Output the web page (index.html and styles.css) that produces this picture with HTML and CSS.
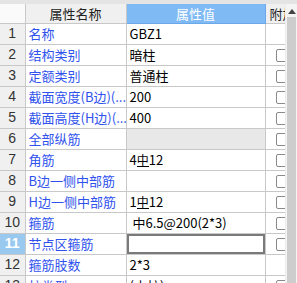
FILE: index.html
```html
<!DOCTYPE html>
<html lang="zh-CN">
<head>
    <meta charset="UTF-8">
    <title>属性编辑</title>
    <link rel="stylesheet" href="styles.css">
</head>
<body>
    <div class="panel">
        <div class="grid-wrap">
            <table class="prop-grid">
                <colgroup>
                    <col class="c-no"><col class="c-name"><col class="c-val"><col class="c-att">
                </colgroup>
                <thead>
                    <tr>
                        <th class="corner"></th>
                        <th>属性名称</th>
                        <th class="active">属性值</th>
                        <th class="att">附加</th>
                    </tr>
                </thead>
                <tbody>
                    <tr><td class="no">1</td><td class="name">名称</td><td class="val">GBZ1</td><td class="att"></td></tr>
                    <tr><td class="no">2</td><td class="name">结构类别</td><td class="val">暗柱</td><td class="att"><span class="chk"></span></td></tr>
                    <tr><td class="no">3</td><td class="name">定额类别</td><td class="val">普通柱</td><td class="att"><span class="chk"></span></td></tr>
                    <tr><td class="no">4</td><td class="name">截面宽度(B边)(...</td><td class="val">200</td><td class="att"><span class="chk"></span></td></tr>
                    <tr><td class="no">5</td><td class="name">截面高度(H边)(...</td><td class="val">400</td><td class="att"><span class="chk"></span></td></tr>
                    <tr><td class="no">6</td><td class="name">全部纵筋</td><td class="val grey"></td><td class="att"><span class="chk"></span></td></tr>
                    <tr><td class="no">7</td><td class="name">角筋</td><td class="val">4<span class="bar">中</span>12</td><td class="att"><span class="chk"></span></td></tr>
                    <tr><td class="no">8</td><td class="name">B边一侧中部筋</td><td class="val"></td><td class="att"><span class="chk"></span></td></tr>
                    <tr><td class="no">9</td><td class="name">H边一侧中部筋</td><td class="val">1<span class="bar">中</span>12</td><td class="att"><span class="chk"></span></td></tr>
                    <tr><td class="no">10</td><td class="name">箍筋</td><td class="val">&nbsp;中6.5@200(2*3)</td><td class="att"><span class="chk"></span></td></tr>
                    <tr class="current"><td class="no">11</td><td class="name">节点区箍筋</td><td class="val"><div class="editor"></div></td><td class="att"><span class="chk"></span></td></tr>
                    <tr><td class="no">12</td><td class="name">箍筋肢数</td><td class="val">2*3</td><td class="att"></td></tr>
                    <tr><td class="no">13</td><td class="name">柱类型</td><td class="val">(中柱)</td><td class="att"><span class="chk"></span></td></tr>
                </tbody>
            </table>
        </div>
        <div class="scrollbar">
            <span class="arrow"></span>
            <span class="thumb"></span>
        </div>
    </div>
</body>
</html>
```

FILE: styles.css
```css
* {
    margin: 0;
    padding: 0;
    box-sizing: border-box;
}
body {
    font-family: "Noto Sans CJK SC", "Liberation Sans", sans-serif;
    background: #ffffff;
    color: #000000;
    overflow: hidden;
}
.panel { display: flex; width: 297px; height: 283px; padding-top: 4px; background: #ffffff; border-top: 4px solid #e4e4e4; padding-top: 0; overflow: hidden; }
.grid-wrap { width: 285px; overflow: hidden; flex-shrink: 0; }
.prop-grid { border-collapse: collapse; table-layout: fixed; width: 310px; font-size: 13px; }
.c-no { width: 25px; }
.c-name { width: 101px; }
.c-val { width: 139px; }
.c-att { width: 45px; }
.prop-grid th { height: 19px; font-weight: normal; background: #f0f0f0; color: #222; border: 1px solid #c8c8c8; border-top: none; line-height: 17px; text-align: center; }
.prop-grid th.corner { background: #fafafa; border-left: none; }
.prop-grid th.active { background: #80baf4; color: #ffffff; border-color: #6aa8ea; }
.prop-grid th.att { text-align: left; padding-left: 4px; }
.prop-grid td { height: 21px; border: 1px solid #c8c8c8; white-space: nowrap; overflow: hidden; line-height: 19px; }
.prop-grid td.no { background: #f0f0f0; text-align: center; font-family: "Liberation Sans", sans-serif; font-size: 14px; color: #333; border-left: none; }
.prop-grid td.name { color: #2f52ee; padding-left: 3px; }
.prop-grid td.val { padding-left: 3px; }
.prop-grid td.val.grey { background: #e8e8e8; }
.prop-grid td.att { border-right: none; padding-left: 10px; }
.current td.no { background: #99c9ef; color: #ffffff; font-weight: bold; }
.current td.val { padding: 0; }
.editor { height: 20px; border: 2px solid #7a7a7a; }
.bar { display: inline-block; line-height: 13px; border-bottom: 1px solid #000; font-size: 12px; }
.chk { display: inline-block; width: 13px; height: 13px; border: 1px solid #8a8a8a; border-radius: 2px; vertical-align: middle; margin-top: -2px; }
.scrollbar { position: relative; width: 12px; background: #f4f4f4; flex-shrink: 0; border-left: 1px solid #ececec; }
.arrow { position: absolute; top: 5px; left: 2px; width: 0; height: 0; border-left: 4px solid transparent; border-right: 4px solid transparent; border-bottom: 5px solid #444; }
.thumb { position: absolute; top: 13px; left: 1px; width: 9px; bottom: 0; background: #cdcdcd; }
```
